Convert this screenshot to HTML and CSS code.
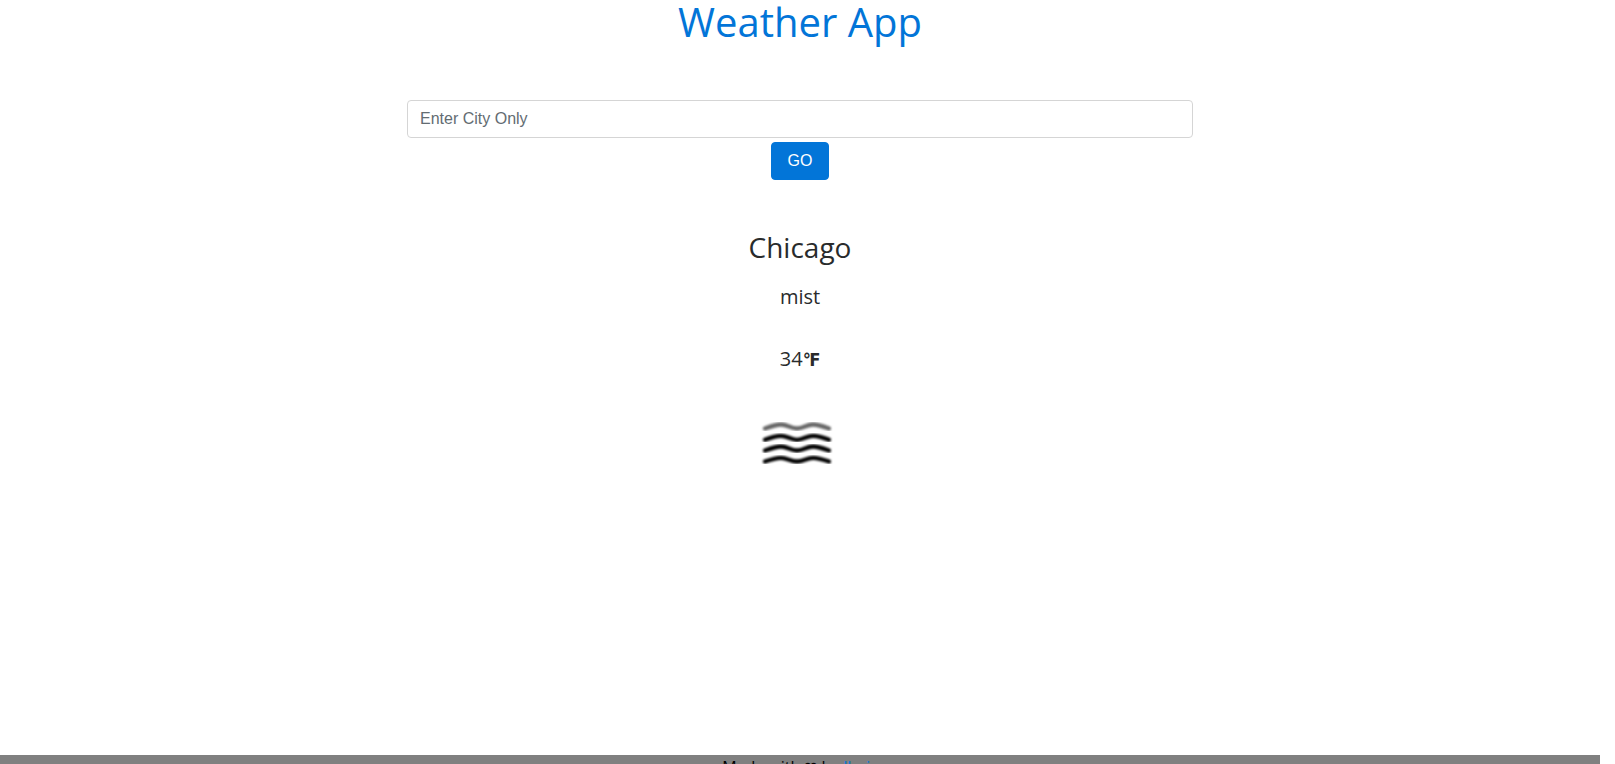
FILE: index.html
```html
<!DOCTYPE html>
<html lang="en">
<head>
<meta charset="utf-8">
<title>Weather App</title>
<link rel="stylesheet" href="styles.css">
</head>
<body>
<main class="app">
  <h1 class="title">Weather App</h1>
  <form class="search">
    <input class="city-input" type="text" placeholder="Enter City Only" aria-label="City">
    <button class="go" type="button">GO</button>
  </form>
  <section class="weather">
    <h2 class="city">Chicago</h2>
    <p class="summary">mist</p>
    <p class="temperature">34<b class="unit">℉</b></p>
    <svg class="icon" viewBox="0 0 120 90" role="img" aria-label="mist">
      <defs><filter id="soft" x="-10%" y="-50%" width="120%" height="200%"><feGaussianBlur stdDeviation="0.9"/></filter></defs>
      <g fill="none" stroke="#000" stroke-width="4.300" stroke-linecap="round">
        <path filter="url(#soft)" stroke="#666" d="M25 28.500C32 26 37 24.500 41 24.500C47 24.500 51 28.500 57 28.500C63 28.500 67 24.500 73 24.500C77 24.500 82 26 89 28.500"/>
        <path filter="url(#soft)" d="M25 39.800C32 37 37 35.800 41 35.800C47 35.800 51 39.800 57 39.800C63 39.800 67 35.800 73 35.800C77 35.800 82 37 89 39.800"/>
        <path filter="url(#soft)" d="M25 50.500C32 48 37 46.500 41 46.500C47 46.500 51 50.500 57 50.500C63 50.500 67 46.500 73 46.500C77 46.500 82 48 89 50.500"/>
        <path filter="url(#soft)" d="M25 61.500C32 59 37 57.800 41 57.800C47 57.800 51 61.500 57 61.500C63 61.500 67 57.800 73 57.800C77 57.800 82 59 89 61.500"/>
      </g>
    </svg>
  </section>
</main>
<footer class="footer">Made with ❤ by <a href="#">llrvis</a></footer>
</body>
</html>
```
FILE: styles.css
```css
* {
  box-sizing: border-box;
}

html {
  height: 100%;
  overflow: hidden;
  background: #fff;
}

body {
  display: flex;
  flex-direction: column;
  min-height: 100%;
  margin: 0 15px 0 0;
  color: #292b2c;
  font: 16px/24px "Open Sans", sans-serif;
  text-align: center;
}

.app {
  flex: none;
  min-height: calc(100vh - 9px);
}

.title {
  margin: 0 0 56px;
  color: #0275d8;
  font-size: 40px;
  font-weight: 400;
  line-height: 44px;
}

.search {
  display: flex;
  flex-direction: column;
  align-items: center;
  gap: 4px;
  width: 50%;
  margin: 0 auto 49px;
  padding: 0 7px;
}

.city-input,
.go {
  height: 38px;
  border-radius: 4px;
  font: 16px/20px "Liberation Sans", Arial, sans-serif;
}

.city-input {
  width: 100%;
  padding: 8px 12px;
  border: 1px solid #d5d5d5;
  color: #464a4c;
}

.city-input::placeholder {
  color: #636c72;
  opacity: 1;
}

.go {
  padding: 8px 16px;
  border: 1px solid #0275d8;
  background: #0275d8;
  color: #fff;
}

.city {
  margin: 0 0 17px;
  font-size: 28px;
  font-weight: 400;
  line-height: 36px;
}

.summary,
.temperature {
  margin: 0 0 32px;
  font-size: 20px;
  line-height: 30px;
}

.temperature {
  margin: 0 0 26px;
}

.unit {
  font-family: "DejaVu Sans Condensed", "DejaVu Sans", sans-serif;
  font-size: 18px;
  line-height: 20px;
}

.icon {
  display: block;
  width: 120px;
  height: 90px;
  margin: 0 auto;
}

.footer {
  flex: none;
  background: #808080;
  color: #000;
}

.footer a {
  color: #0275d8;
  text-decoration: none;
}
```
